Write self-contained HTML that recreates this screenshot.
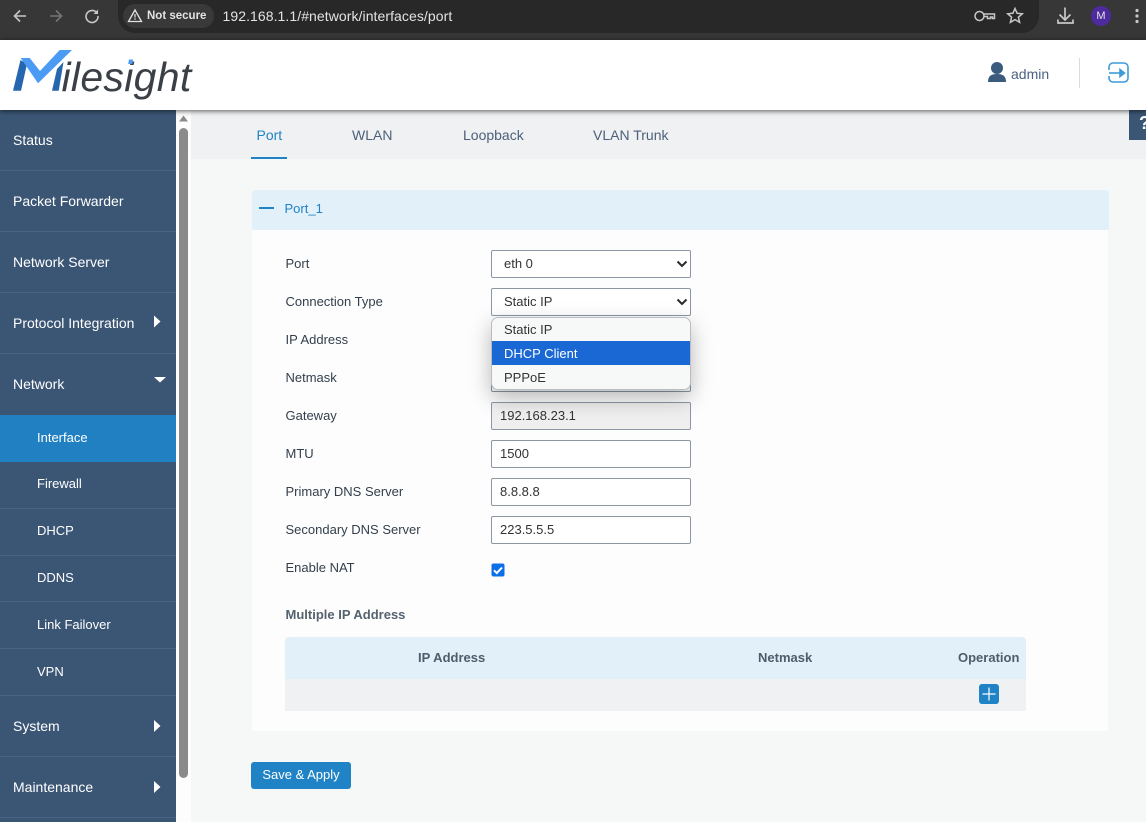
<!DOCTYPE html>
<html><head><meta charset="utf-8"><style>
*{box-sizing:border-box}
html,body{margin:0;padding:0;width:1146px;height:822px;overflow:hidden;background:#f6f8f8;font-family:"Liberation Sans",sans-serif;font-size:13px;color:#333}
.a{position:absolute;white-space:nowrap}
.nav{left:13px;color:#fff;line-height:18px;font-size:14px}
.sub{left:37px;color:#fff;line-height:18px;font-size:13px}
.ln{position:absolute;left:0;width:176px;height:1px;background:#466384}
.lab{left:285.5px;line-height:18px;color:#333f4c}
.inp{position:absolute;left:491px;width:200px;height:28px;border:1px solid #8b97a3;border-radius:2px;background:#fff;line-height:25px;padding-left:8px;color:#333}
.sel{padding-left:12px}
.tab{top:126px;line-height:18px;color:#4c6079;font-size:14px}
</style></head><body>
<!-- browser bar -->
<div class="a" style="left:0;top:0;width:1146px;height:40px;background:#373737"></div>
<div class="a" style="left:118px;top:0;width:921px;height:33px;background:#282828;border-radius:0 0 17px 17px"></div>
<div class="a" style="left:123px;top:4px;width:91px;height:24px;background:#393939;border-radius:12px"></div>
<svg class="a" style="left:0;top:0" width="150" height="40" fill="none" stroke-width="1.6">
<path d="M26 16H15M20 10.500l-5.500 5.500 5.500 5.500" stroke="#c7c7c7"/>
<path d="M50 16h11M56 10.500l5.500 5.500-5.500 5.500" stroke="#757575"/>
<path d="M96.500 12.500A6 6 0 1 0 98 16" stroke="#c7c7c7"/><path d="M98 9.500v4.500h-4.500z" fill="#c7c7c7"/>
<path d="M128.500 21.500l6.500-11.500 6.500 11.500z" stroke="#e3e3e3" stroke-width="1.300"/>
<path d="M135 14v3.500M135 18.300v1.500" stroke="#e3e3e3" stroke-width="1.200"/>
</svg>
<div class="a" style="left:147px;top:8px;font-size:11.500px;line-height:16px;font-weight:bold;color:#e3e3e3">Not secure</div>
<div class="a" style="left:222.500px;top:8px;font-size:14px;line-height:17px;letter-spacing:.07px;color:#e3e3e3">192.168.1.1/#network/interfaces/port</div>
<svg class="a" style="left:960px;top:0" width="186" height="40" fill="none" stroke="#c7c7c7" stroke-width="1.500">
<circle cx="19.500" cy="16" r="4.500"/><path d="M24 14h10.500v4.500h-2v-1.500h-2v1.500h-3v-2h-3.500"/>
<path d="M55 8.500l2.100 4.800 5.200.5-3.900 3.400 1.200 5.100-4.600-2.700-4.600 2.700 1.200-5.100-3.900-3.400 5.200-.5z"/>
<path d="M105 7.500v12M99.500 14.500l5.500 5.500 5.500-5.500M98 19.500v3.500h15v-3.500" stroke-width="1.700"/>
<circle cx="141" cy="16" r="10" fill="#4e2a9f" stroke="none"/>
<circle cx="177" cy="10.500" r="1.600" fill="#c7c7c7" stroke="none"/><circle cx="177" cy="16" r="1.600" fill="#c7c7c7" stroke="none"/><circle cx="177" cy="21.500" r="1.600" fill="#c7c7c7" stroke="none"/>
</svg>
<div class="a" style="left:1096px;top:9px;width:10px;text-align:center;font-size:11px;line-height:14px;color:#e3e3e3">M</div>
<!-- header -->
<div class="a" style="left:0;top:40px;width:1146px;height:70px;background:#fff;box-shadow:0 1px 5px rgba(0,0,0,.65);z-index:5">
<svg class="a" style="left:0;top:0" width="80" height="60">
<path d="M13 50.700L20.500 20l6.500 4-6 26.700z" fill="#2566ae"/>
<path d="M52 50.700L57 29l6.500-7-4.800 28.700z" fill="#2566ae"/>
<path d="M20.700 18h9l10.300 13 19.700-21H72L38 43.300z" fill="#4b9bf5"/>
</svg>
<div class="a" style="left:61.500px;top:11.500px;font-size:41px;line-height:50px;font-style:italic;color:#3b3f46;letter-spacing:.3px">ilesight</div>
<svg class="a" style="left:128px;top:19px" width="6" height="6"><path d="M1 .5h4L4.300 5H.2z" fill="#4b9bf5"/></svg>
<svg class="a" style="left:987px;top:21px" width="22" height="22"><circle cx="10" cy="7" r="6" fill="#3a5a7e"/><path d="M1 21c0-6 3-8 9-8s9 2 9 8z" fill="#3a5a7e"/></svg>
<div class="a" style="left:1011px;top:25px;line-height:18px;font-size:14px;color:#4b6280">admin</div>
<div class="a" style="left:1079px;top:18px;width:1px;height:30px;background:#d8dcdf"></div>
<svg class="a" style="left:1108px;top:22px" width="22" height="22" fill="none" stroke="#3f9bd8" stroke-width="1.600"><path d="M1 8V5a4 4 0 0 1 4-4h11a4 4 0 0 1 4 4v11a4 4 0 0 1-4 4H5a4 4 0 0 1-4-4v-2"/><path d="M1 11h13"/><path d="M12 7.500l4.500 3.500-4.500 3.500z" fill="#3f9bd8"/></svg>
</div>
<!-- sidebar -->
<div class="a" style="left:0;top:110px;width:176px;height:712px;background:#3b5675"></div>
<div class="ln" style="top:170px"></div><div class="ln" style="top:231px"></div><div class="ln" style="top:292px"></div><div class="ln" style="top:353px"></div>
<div class="ln" style="top:508px"></div><div class="ln" style="top:555px"></div><div class="ln" style="top:601px"></div><div class="ln" style="top:648px"></div><div class="ln" style="top:695px"></div><div class="ln" style="top:756px"></div><div class="ln" style="top:817px"></div>
<div class="a nav" style="top:131px">Status</div>
<div class="a nav" style="top:192px">Packet Forwarder</div>
<div class="a nav" style="top:253px">Network Server</div>
<div class="a nav" style="top:314px">Protocol Integration</div>
<div class="a nav" style="top:375px">Network</div>
<div class="a" style="left:0;top:415px;width:176px;height:47px;background:#2180c1"></div>
<div class="a sub" style="top:429px">Interface</div>
<div class="a sub" style="top:475px">Firewall</div>
<div class="a sub" style="top:522px">DHCP</div>
<div class="a sub" style="top:569px">DDNS</div>
<div class="a sub" style="top:616px">Link Failover</div>
<div class="a sub" style="top:663px">VPN</div>
<div class="a nav" style="top:717px">System</div>
<div class="a nav" style="top:778px">Maintenance</div>
<svg class="a" style="left:150px;top:310px" width="20" height="490" fill="#fff">
<path d="M4 5.500l6.500 6-6.500 6z"/><path d="M4 410l6.500 6-6.500 6z"/><path d="M4 471l6.500 6-6.500 6z"/><path d="M4 67h12l-6 5.500z"/>
</svg>
<!-- scrollbar -->
<div class="a" style="left:176px;top:110px;width:15px;height:712px;background:#fdfdfd"></div>
<svg class="a" style="left:176px;top:110px" width="15" height="14"><path d="M3 11.500L7.500 5.500 12 11.500z" fill="#8a8a8a"/></svg>
<div class="a" style="left:179px;top:128px;width:9px;height:650px;background:#8a8a8a;border-radius:4.500px"></div>
<!-- tabs -->
<div class="a" style="left:191px;top:110px;width:955px;height:49px;background:#f0f1f3"></div>
<div class="a" style="left:251px;top:157px;width:36px;height:2px;background:#2083c6"></div>
<div class="a tab" style="left:256.500px;color:#2083c6">Port</div>
<div class="a tab" style="left:352px">WLAN</div>
<div class="a tab" style="left:463px">Loopback</div>
<div class="a tab" style="left:593px">VLAN Trunk</div>
<div class="a" style="left:1129px;top:110px;width:17px;height:30px;background:#3b5675;overflow:hidden"><div class="a" style="left:10px;top:3px;color:#fff;font-weight:bold;font-size:18px;line-height:20px">?</div></div>
<!-- panel -->
<div class="a" style="left:252px;top:190px;width:856px;height:541px;background:#fdfdfd"></div>
<div class="a" style="left:252px;top:190px;width:857px;height:40px;background:#e2f0fa;border-radius:3px 3px 0 0"></div>
<div class="a" style="left:259px;top:207px;width:15px;height:2px;background:#2083c6"></div>
<div class="a" style="left:284.500px;top:200px;line-height:18px;font-size:13px;color:#2083c6">Port_1</div>
<div class="a lab" style="top:255px">Port</div>
<div class="a lab" style="top:293px">Connection Type</div>
<div class="a lab" style="top:331px">IP Address</div>
<div class="a lab" style="top:369px">Netmask</div>
<div class="a lab" style="top:407px">Gateway</div>
<div class="a lab" style="top:445px">MTU</div>
<div class="a lab" style="top:483px">Primary DNS Server</div>
<div class="a lab" style="top:521px">Secondary DNS Server</div>
<div class="a lab" style="top:559px">Enable NAT</div>
<div class="inp sel" style="top:250px">eth 0</div>
<div class="inp sel" style="top:288px">Static IP</div>
<svg class="a" style="left:676px;top:259px" width="12" height="50" fill="none" stroke="#2a2a2a" stroke-width="2"><path d="M1.500 2.500l4.500 4.500 4.500-4.500M1.500 40.500l4.500 4.500 4.500-4.500"/></svg>
<div class="inp" style="top:326px"></div>
<div class="inp" style="top:364px"></div>
<div class="inp" style="top:402px;background:#efefef">192.168.23.1</div>
<div class="inp" style="top:440px">1500</div>
<div class="inp" style="top:478px">8.8.8.8</div>
<div class="inp" style="top:516px">223.5.5.5</div>
<!-- dropdown -->
<div class="a" style="left:491px;top:317px;width:200px;height:73px;background:#f7f9f9;border:1px solid #b9bdc1;border-radius:7px;box-shadow:0 8px 22px rgba(0,0,0,.28);overflow:hidden;z-index:3;color:#333">
<div style="height:23px;line-height:24px;padding-left:12px">Static IP</div>
<div style="height:24px;line-height:25px;padding-left:12px;background:#1a68d4;color:#fff">DHCP Client</div>
<div style="height:24px;line-height:25px;padding-left:12px">PPPoE</div>
</div>
<svg class="a" style="left:491px;top:563px" width="14" height="14"><rect x=".5" y=".5" width="13" height="13" rx="2" fill="#0b6fe8"/><path d="M3 7.300l2.800 2.800L11 4.500" fill="none" stroke="#fff" stroke-width="2"/></svg>
<div class="a" style="left:285.500px;top:605.500px;line-height:18px;font-weight:bold;font-size:13px;color:#55626f">Multiple IP Address</div>
<!-- table -->
<div class="a" style="left:285px;top:637px;width:741px;height:42px;background:#e2f0fa;border-radius:4px 4px 0 0"></div>
<div class="a" style="left:285px;top:679px;width:741px;height:32px;background:#f0f1f3"></div>
<div class="a" style="left:418px;top:648.500px;line-height:18px;font-weight:bold;font-size:13px;color:#4f5c6b">IP Address</div>
<div class="a" style="left:758px;top:648.500px;line-height:18px;font-weight:bold;font-size:13px;color:#4f5c6b">Netmask</div>
<div class="a" style="left:958px;top:648.500px;line-height:18px;font-weight:bold;font-size:13px;color:#4f5c6b">Operation</div>
<svg class="a" style="left:979px;top:684px" width="20" height="20"><rect width="20" height="20" rx="3" fill="#2083c6"/><path d="M10 3.500v13M3.500 10h13" stroke="#fff" stroke-width="1.200"/></svg>
<div class="a" style="left:251px;top:762px;width:100px;height:27px;background:#2083c6;border-radius:3px;color:#fff;text-align:center;line-height:25px;font-size:13px">Save &amp; Apply</div>
</body></html>
